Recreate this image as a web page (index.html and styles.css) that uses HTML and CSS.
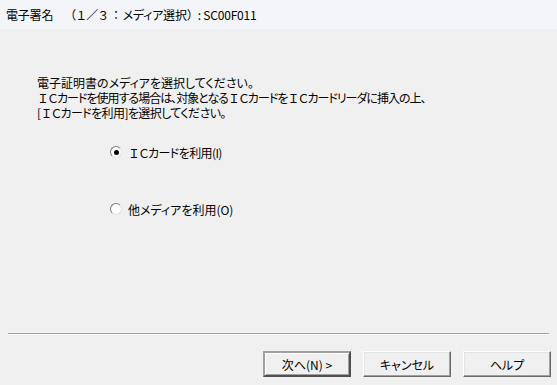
FILE: index.html
```html
<!DOCTYPE html>
<html lang="ja">
<head>
    <meta charset="UTF-8">
    <title>電子署名</title>
    <link rel="stylesheet" href="styles.css">
</head>
<body>
    <div class="dialog">
        <div class="titlebar">電子署名<span class="fw lead">　（１／３ ： </span>メディア選択<span class="fw">）</span>: SC00F011</div>

        <div class="content">
            <div class="message">
                <div class="line">電子証明書のメディアを選択してください。</div>
                <div class="line tighter"><span class="fw">ＩＣ</span>カードを使用する場合は、対象となる<span class="fw">ＩＣ</span>カードを<span class="fw">ＩＣ</span>カードリーダに挿入の上、</div>
                <div class="line tight">[<span class="fw">ＩＣ</span>カードを利用]を選択してください。</div>
            </div>

            <div class="options">
                <label class="option">
                    <span class="radio checked"></span>
                    <span class="option-text tight"><span class="fw">ＩＣ</span>カードを利用(I)</span>
                </label>
                <label class="option">
                    <span class="radio"></span>
                    <span class="option-text">他メディアを利用(O)</span>
                </label>
            </div>
        </div>

        <div class="separator"></div>

        <div class="buttons">
            <button class="btn default">次へ(N) &gt;</button>
            <button class="btn">キャンセル</button>
            <button class="btn">ヘルプ</button>
        </div>
    </div>
</body>
</html>
```

FILE: styles.css
```css
html, body {
    margin: 0;
    padding: 0;
    height: 100%;
}
body {
    background: #f0f0f0;
    font-family: "Noto Sans CJK JP", "Noto Sans", sans-serif;
    font-size: 12px;
    font-feature-settings: "palt";
    color: #000;
}
.dialog {
    display: flex;
    flex-direction: column;
    height: 385px;
}
.titlebar {
    height: 29px;
    line-height: 29px;
    padding-left: 6px;
    background: #f4f5f8;
    font-size: 12px;
    letter-spacing: -0.2px;
}
.fw {
    font-feature-settings: normal;
    letter-spacing: -2px;
}
.titlebar .fw {
    letter-spacing: -1px;
}
.titlebar .lead {
    margin-left: 6px;
}
.content {
    flex: 1;
    padding-left: 37px;
}
.message {
    margin-top: 46px;
}
.line {
    height: 15px;
    line-height: 15px;
}
.tight {
    letter-spacing: -0.6px;
}
.tighter {
    letter-spacing: -1px;
}
.options {
    display: flex;
    flex-direction: column;
    gap: 41px;
    margin-top: 24px;
    padding-left: 73px;
}
.option {
    display: flex;
    align-items: center;
    gap: 6px;
    height: 16px;
}
.radio {
    position: relative;
    width: 10px;
    height: 10px;
    border: 1px solid;
    border-color: #7a7a7a #e0e0e0 #e0e0e0 #7a7a7a;
    border-radius: 50%;
    background: #fff;
}
.radio.checked::after {
    content: "";
    position: absolute;
    top: 2.5px;
    left: 2.5px;
    width: 5px;
    height: 5px;
    border-radius: 50%;
    background: #000;
}
.separator {
    margin: 0 8px;
    height: 1px;
    background: #a0a0a0;
    border-bottom: 1px solid #fff;
}
.buttons {
    display: flex;
    justify-content: flex-end;
    gap: 12px;
    padding: 16px 6px 8px 0;
}
.btn {
    box-sizing: border-box;
    width: 88px;
    height: 26px;
    padding: 0;
    background: #f0f0f0;
    font-family: inherit;
    font-size: 12px;
    font-feature-settings: "palt";
    color: #000;
    border: 1px solid;
    border-color: #fff #696969 #696969 #fff;
    box-shadow: inset -1px -1px 0 #a0a0a0, inset 1px 1px 0 #e3e3e3;
}
.btn.default {
    border: 2px solid;
    border-color: #a0a0a0 #505050 #505050 #a0a0a0;
    box-shadow: inset 1px 1px 0 #fff, inset -1px -1px 0 #a0a0a0;
}
```
